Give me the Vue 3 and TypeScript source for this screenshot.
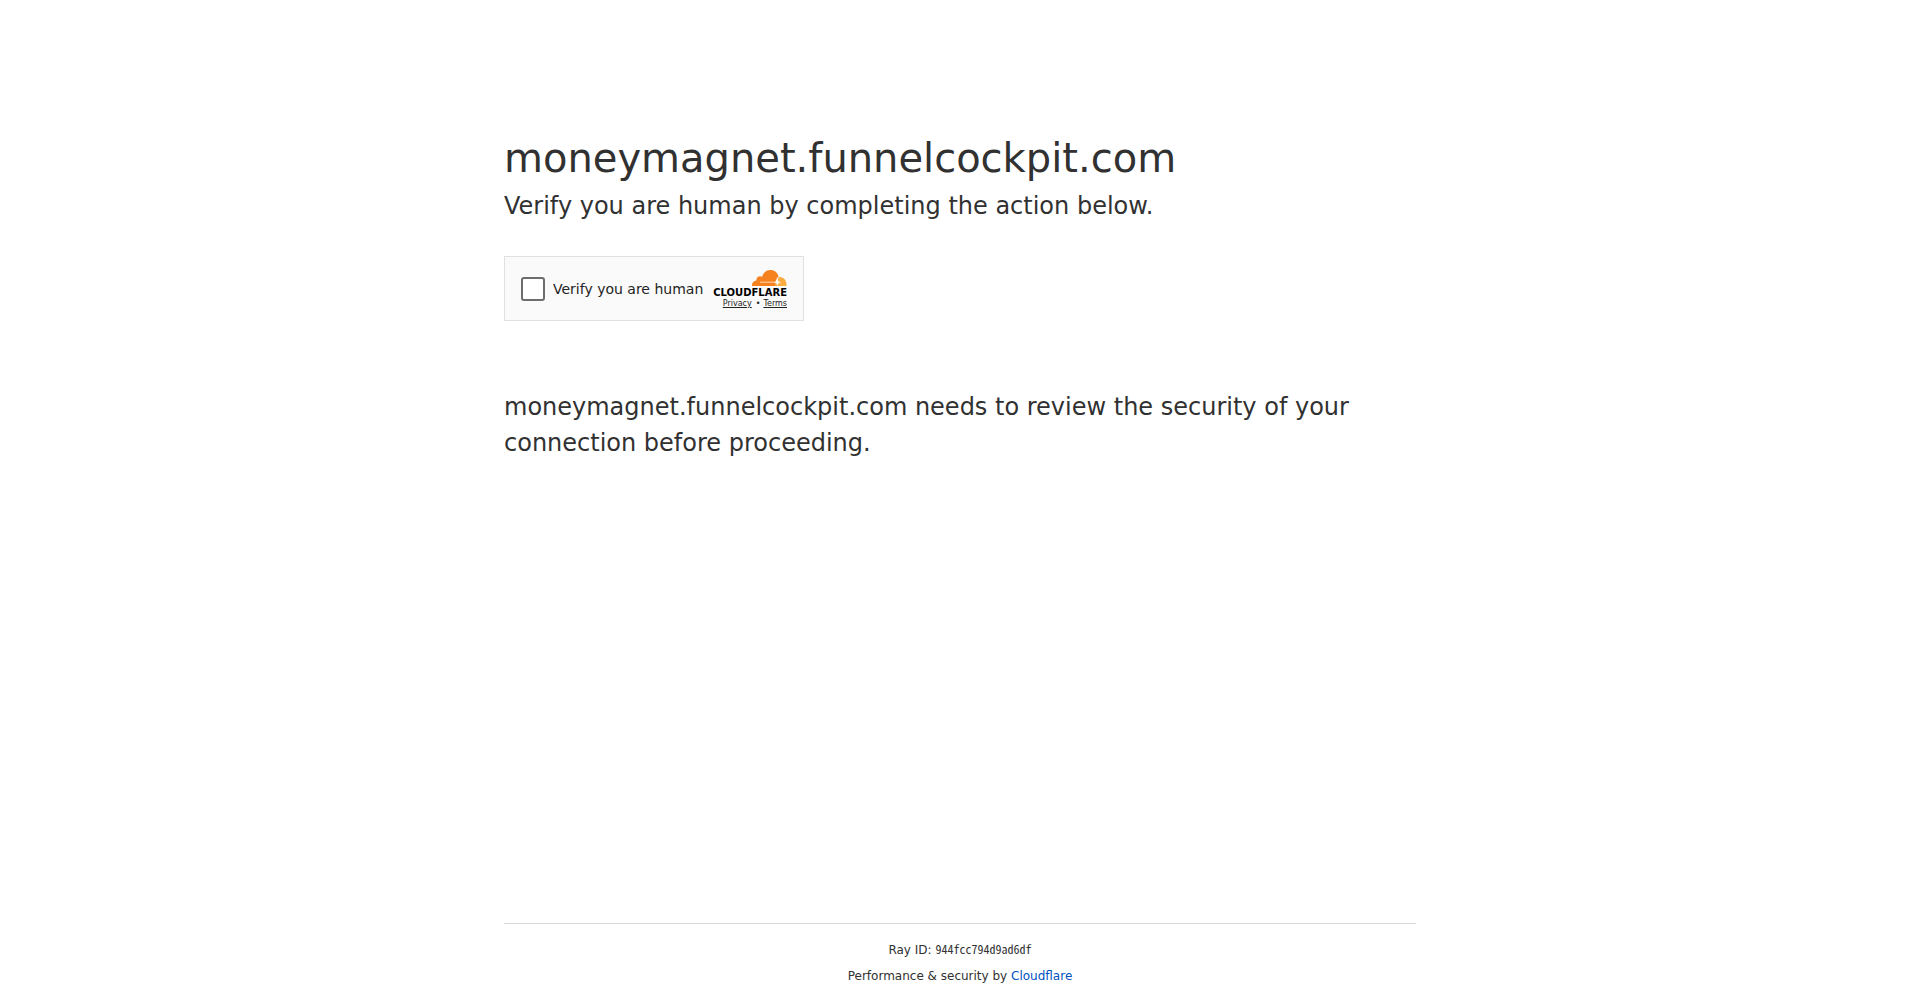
<script setup lang="ts">
const host: string = 'moneymagnet.funnelcockpit.com'
const rayId: string = '944fcc794d9ad6df'
</script>

<template>
  <div class="page">
    <main class="content">
      <h1>{{ host }}</h1>
      <p class="lead">Verify you are human by completing the action below.</p>
      <div class="widget">
        <label class="check"><input type="checkbox" /><span>Verify you are human</span></label>
        <div class="brand">
          <svg class="logo" viewBox="0 0 36 16" aria-hidden="true">
            <path fill="#f6821f" d="M1 16C.6 13 2.500 10.800 5.400 10.500C5 7.500 8.300 5 11.100 6.800C12.200 2.800 15.300 0 19.200 0C23.500 0 26.600 2.700 27.700 6.500C26.500 7 25.700 8 25.400 9.500L24.600 11.300L24.900 16Z" />
            <path fill="#fbad41" d="M24 16L25 12.500L27.800 7.100C32.500 6.500 36 10.500 35.500 16Z" />
            <path fill="#fff" fill-opacity=".45" d="M9 11.500H24V13H9Z" />
            <path fill="#fff" d="M26.500 8.500L27.400 11.200L30 12.200L27.400 13.200L26.500 16L25.400 13.200L23 12.200L25.400 11.200Z" />
          </svg>
          <span class="wordmark">CLOUDFLARE</span>
          <div class="links"><a href="#">Privacy</a><span class="dot">•</span><a href="#">Terms</a></div>
        </div>
      </div>
      <p class="lead">{{ host }} needs to review the security of your connection before proceeding.</p>
    </main>
    <footer>
      <div class="ray"><span>Ray ID:</span><code>{{ rayId }}</code></div>
      <div>Performance &amp; security by <a href="#">Cloudflare</a></div>
    </footer>
  </div>
</template>

<style>
body { margin: 0; background: #fff; }
</style>
<style scoped>
* { box-sizing: border-box; }
.page { display: flex; flex-direction: column; min-height: 100vh; color: #313131; font-family: "DejaVu Sans", sans-serif; }
.content { flex: 1; width: 100%; max-width: 960px; margin: 128px auto 0; padding: 0 24px; }
h1 { margin: 0; font-size: 40px; font-weight: 400; line-height: 60px; }
.lead { margin: 0; font-size: 24px; line-height: 36px; }
.widget { display: flex; align-items: center; justify-content: space-between; width: 300px; height: 65px; margin: 32px 0 68px; padding: 0 16px; border: 1px solid #e0e0e0; background: #fafafa; }
.check { display: flex; align-items: center; gap: 8px; font-size: 14px; color: #232323; white-space: nowrap; }
input { appearance: none; width: 24px; height: 24px; margin: 0; border: 2px solid #6d6d6d; border-radius: 3px; background: #fff; }
.brand { display: flex; flex-direction: column; align-items: flex-end; color: #232323; }
.logo { display: block; width: 36px; height: 16px; }
.wordmark { color: #000; font-size: 10px; font-weight: 700; line-height: 14px; }
.links { font-size: 8px; line-height: 8px; }
.links a { color: #232323; }
.dot { margin: 0 3px 0 4px; }
footer { width: calc(100% - 48px); max-width: 912px; margin: 0 auto; padding: 16px 0 15px; border-top: 1px solid #d9d9d9; text-align: center; font-size: 12px; line-height: 18px; }
.ray { display: flex; align-items: flex-start; justify-content: center; gap: 4px; margin-bottom: 7px; line-height: 20px; }
footer a { color: #0051c3; text-decoration: none; }
code { font-family: "Noto Sans Mono CJK SC", "Liberation Mono", monospace; font-size: 12px; line-height: 18px; }
</style>
